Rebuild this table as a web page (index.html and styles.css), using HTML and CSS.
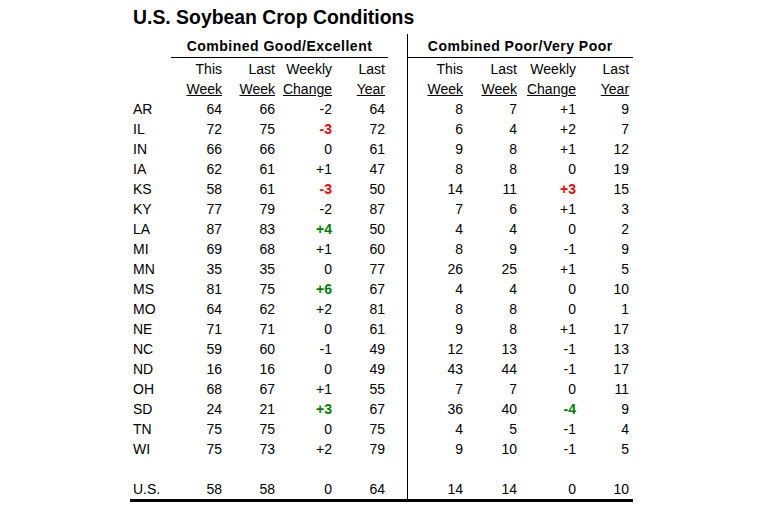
FILE: index.html
```html
<!DOCTYPE html>
<html lang="en">
<head>
<meta charset="utf-8">
<title>U.S. Soybean Crop Conditions</title>
<link rel="stylesheet" href="styles.css">
</head>
<body>
<div class="page">
  <h1 class="title">U.S. Soybean Crop Conditions</h1>
  <table class="cond">
    <colgroup>
      <col class="w-state"><col class="w1"><col class="w2"><col class="w3"><col class="w4">
      <col class="w-gap">
      <col class="w5"><col class="w6"><col class="w7"><col class="w8">
    </colgroup>
    <thead>
      <tr class="grp">
        <th></th>
        <th colspan="4" class="grp-h">Combined Good/Excellent</th>
        <th></th>
        <th colspan="4" class="grp-h sep">Combined Poor/Very Poor</th>
      </tr>
      <tr class="h1">
        <th></th><th>This</th><th>Last</th><th>Weekly</th><th class="end4">Last</th>
        <th></th>
        <th class="sep">This</th><th>Last</th><th>Weekly</th><th class="end8">Last</th>
      </tr>
      <tr class="h2">
        <th></th><th><span class="u">Week</span></th><th><span class="u">Week</span></th><th><span class="u">Change</span></th><th class="end4"><span class="u">Year</span></th>
        <th></th>
        <th class="sep"><span class="u">Week</span></th><th><span class="u">Week</span></th><th><span class="u">Change</span></th><th class="end8"><span class="u">Year</span></th>
      </tr>
    </thead>
    <tbody>
      <tr><td class="state">AR</td><td>64</td><td>66</td><td>-2</td><td class="end4">64</td><td></td><td class="sep">8</td><td>7</td><td>+1</td><td class="end8">9</td></tr>
      <tr><td class="state">IL</td><td>72</td><td>75</td><td class="neg">-3</td><td class="end4">72</td><td></td><td class="sep">6</td><td>4</td><td>+2</td><td class="end8">7</td></tr>
      <tr><td class="state">IN</td><td>66</td><td>66</td><td>0</td><td class="end4">61</td><td></td><td class="sep">9</td><td>8</td><td>+1</td><td class="end8">12</td></tr>
      <tr><td class="state">IA</td><td>62</td><td>61</td><td>+1</td><td class="end4">47</td><td></td><td class="sep">8</td><td>8</td><td>0</td><td class="end8">19</td></tr>
      <tr><td class="state">KS</td><td>58</td><td>61</td><td class="neg">-3</td><td class="end4">50</td><td></td><td class="sep">14</td><td>11</td><td class="neg">+3</td><td class="end8">15</td></tr>
      <tr><td class="state">KY</td><td>77</td><td>79</td><td>-2</td><td class="end4">87</td><td></td><td class="sep">7</td><td>6</td><td>+1</td><td class="end8">3</td></tr>
      <tr><td class="state">LA</td><td>87</td><td>83</td><td class="pos">+4</td><td class="end4">50</td><td></td><td class="sep">4</td><td>4</td><td>0</td><td class="end8">2</td></tr>
      <tr><td class="state">MI</td><td>69</td><td>68</td><td>+1</td><td class="end4">60</td><td></td><td class="sep">8</td><td>9</td><td>-1</td><td class="end8">9</td></tr>
      <tr><td class="state">MN</td><td>35</td><td>35</td><td>0</td><td class="end4">77</td><td></td><td class="sep">26</td><td>25</td><td>+1</td><td class="end8">5</td></tr>
      <tr><td class="state">MS</td><td>81</td><td>75</td><td class="pos">+6</td><td class="end4">67</td><td></td><td class="sep">4</td><td>4</td><td>0</td><td class="end8">10</td></tr>
      <tr><td class="state">MO</td><td>64</td><td>62</td><td>+2</td><td class="end4">81</td><td></td><td class="sep">8</td><td>8</td><td>0</td><td class="end8">1</td></tr>
      <tr><td class="state">NE</td><td>71</td><td>71</td><td>0</td><td class="end4">61</td><td></td><td class="sep">9</td><td>8</td><td>+1</td><td class="end8">17</td></tr>
      <tr><td class="state">NC</td><td>59</td><td>60</td><td>-1</td><td class="end4">49</td><td></td><td class="sep">12</td><td>13</td><td>-1</td><td class="end8">13</td></tr>
      <tr><td class="state">ND</td><td>16</td><td>16</td><td>0</td><td class="end4">49</td><td></td><td class="sep">43</td><td>44</td><td>-1</td><td class="end8">17</td></tr>
      <tr><td class="state">OH</td><td>68</td><td>67</td><td>+1</td><td class="end4">55</td><td></td><td class="sep">7</td><td>7</td><td>0</td><td class="end8">11</td></tr>
      <tr><td class="state">SD</td><td>24</td><td>21</td><td class="pos">+3</td><td class="end4">67</td><td></td><td class="sep">36</td><td>40</td><td class="pos">-4</td><td class="end8">9</td></tr>
      <tr><td class="state">TN</td><td>75</td><td>75</td><td>0</td><td class="end4">75</td><td></td><td class="sep">4</td><td>5</td><td>-1</td><td class="end8">4</td></tr>
      <tr><td class="state">WI</td><td>75</td><td>73</td><td>+2</td><td class="end4">79</td><td></td><td class="sep">9</td><td>10</td><td>-1</td><td class="end8">5</td></tr>
      <tr><td class="state"></td><td></td><td></td><td></td><td class="end4"></td><td></td><td class="sep"></td><td></td><td></td><td class="end8"></td></tr>
      <tr class="total"><td class="state">U.S.</td><td>58</td><td>58</td><td>0</td><td class="end4">64</td><td></td><td class="sep">14</td><td>14</td><td>0</td><td class="end8">10</td></tr>
    </tbody>
  </table>
</div>
</body>
</html>
```

FILE: styles.css
```css
html, body {
  margin: 0;
  background: #ffffff;
}

body {
  font-family: "Liberation Sans", Arial, sans-serif;
  color: #000000;
}

.page {
  padding: 6px 0 0 130px;
}

.title {
  margin: 0 0 6px 3px;
  font-size: 19.4px;
  font-weight: bold;
  line-height: 22px;
}

.cond {
  border-collapse: collapse;
  table-layout: fixed;
  width: 503px;
  font-size: 14px;
}

.w-state { width: 41px; }
.w1 { width: 51px; }
.w2 { width: 53px; }
.w3 { width: 57px; }
.w4 { width: 56px; }
.w-gap { width: 19px; }
.w5 { width: 56px; }
.w6 { width: 54px; }
.w7 { width: 59px; }
.w8 { width: 57px; }

.cond th,
.cond td {
  padding: 0;
  height: 20px;
  line-height: 20px;
  text-align: right;
  font-weight: normal;
  white-space: nowrap;
  vertical-align: middle;
}

.cond .grp th {
  height: 23px;
  font-weight: bold;
  text-align: center;
  letter-spacing: 0.5px;
}

.cond .grp-h {
  border-bottom: 1px solid #000000;
}

.cond .h1 th {
  height: 21px;
}

.cond .sep {
  border-left: 1px solid #000000;
}

.cond .state {
  text-align: left;
  padding-left: 3px;
}

.cond .end4 {
  padding-right: 3px;
}

.cond .end8 {
  padding-right: 4px;
}

.u {
  text-decoration: underline;
}

.cond .total td {
  border-bottom: 3px solid #000000;
}

.cond .neg {
  color: #ff0000;
  font-weight: bold;
}

.cond .pos {
  color: #008000;
  font-weight: bold;
}
```
